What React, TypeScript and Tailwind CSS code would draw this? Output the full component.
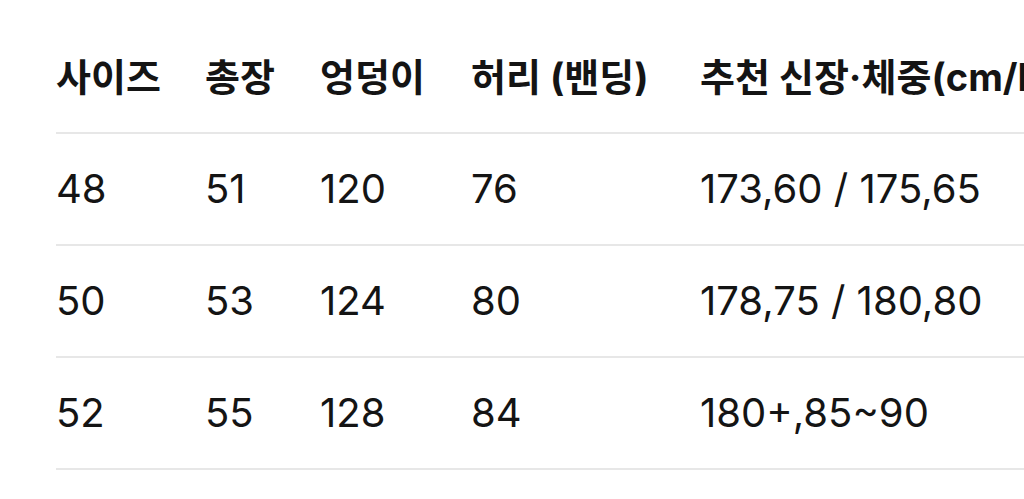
const HEADERS = ["사이즈", "총장", "엉덩이", "허리 (밴딩)", "추천 신장·체중(cm/kg)"];

const ROWS = [
  ["48", "51", "120", "76", "173,60 / 175,65"],
  ["50", "53", "124", "80", "178,75 / 180,80"],
  ["52", "55", "128", "84", "180+,85~90"],
];

const COLS = "grid grid-cols-[149px_115px_151px_229px_1fr]";

export default function App() {
  return (
    <div className="w-[1024px] h-[499px] bg-white overflow-hidden text-[#141414] font-['Inter','Noto_Sans_CJK_KR',sans-serif]">
      <div className="pl-[56px] pt-[22px] w-[1400px]">
        <div className={`${COLS} h-[112px] items-center border-b-2 border-[#e7e7e7]`}>
          {HEADERS.map((h) => (
            <div key={h} className="text-[38px] font-bold whitespace-nowrap">
              {h}
            </div>
          ))}
        </div>
        {ROWS.map((row) => (
          <div key={row[0]} className={`${COLS} h-[112px] items-center border-b-2 border-[#e7e7e7]`}>
            {row.map((c, i) => (
              <div key={i} className="text-[40px] whitespace-nowrap">
                {c}
              </div>
            ))}
          </div>
        ))}
      </div>
    </div>
  );
}
